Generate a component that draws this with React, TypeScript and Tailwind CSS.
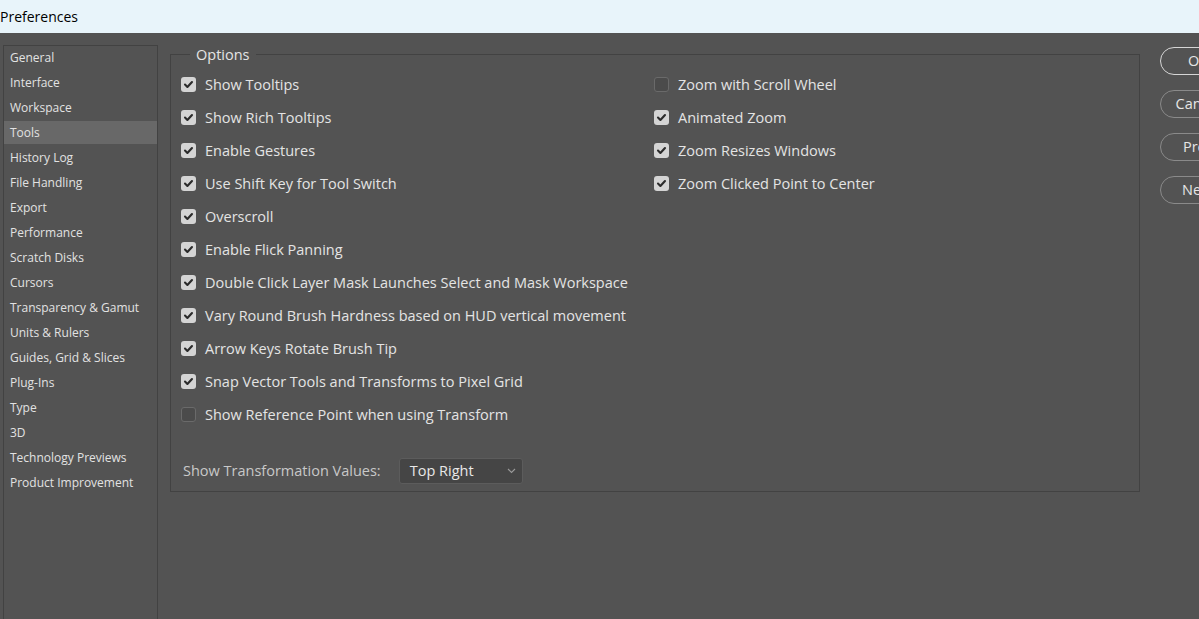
import React from "react";

const sidebar = [
  "General",
  "Interface",
  "Workspace",
  "Tools",
  "History Log",
  "File Handling",
  "Export",
  "Performance",
  "Scratch Disks",
  "Cursors",
  "Transparency & Gamut",
  "Units & Rulers",
  "Guides, Grid & Slices",
  "Plug-Ins",
  "Type",
  "3D",
  "Technology Previews",
  "Product Improvement",
];

const left: [string, boolean][] = [
  ["Show Tooltips", true],
  ["Show Rich Tooltips", true],
  ["Enable Gestures", true],
  ["Use Shift Key for Tool Switch", true],
  ["Overscroll", true],
  ["Enable Flick Panning", true],
  ["Double Click Layer Mask Launches Select and Mask Workspace", true],
  ["Vary Round Brush Hardness based on HUD vertical movement", true],
  ["Arrow Keys Rotate Brush Tip", true],
  ["Snap Vector Tools and Transforms to Pixel Grid", true],
  ["Show Reference Point when using Transform", false],
];

const right: [string, boolean][] = [
  ["Zoom with Scroll Wheel", false],
  ["Animated Zoom", true],
  ["Zoom Resizes Windows", true],
  ["Zoom Clicked Point to Center", true],
];

function Check({ on }: { on: boolean }) {
  return on ? (
    <span className="w-[15px] h-[15px] rounded-[3px] bg-[#d4d4d4] flex items-center justify-center shrink-0">
      <svg width="11" height="11" viewBox="0 0 11 11">
        <path d="M2 5.6 L4.4 8 L9 3" fill="none" stroke="#2b2b2b" strokeWidth="2.1" strokeLinecap="round" strokeLinejoin="round" />
      </svg>
    </span>
  ) : (
    <span className="w-[15px] h-[15px] rounded-[3px] bg-[#4b4b4b] border border-[#6a6a6a] shrink-0" />
  );
}

function Row({ label, on }: { label: string; on: boolean }) {
  return (
    <div className="h-[33px] flex items-center gap-[9px] text-[14.5px] text-[#e4e4e4] whitespace-nowrap">
      <Check on={on} />
      <span>{label}</span>
    </div>
  );
}

export default function App() {
  return (
    <div
      className="w-[1199px] h-[619px] bg-[#535353] overflow-hidden flex flex-col"
      style={{ fontFamily: '"Open Sans", "Noto Sans", sans-serif' }}
    >
      <div className="h-[33px] shrink-0 bg-[#e8f4fa] flex items-center text-[14px] text-black">
        Preferences
      </div>
      <div className="flex flex-1 pt-[12px] min-h-0">
        <div className="ml-[3px] w-[155px] shrink-0 border border-b-0 border-[#424242] flex flex-col gap-[2px]">
          {sidebar.map((s) => (
            <div
              key={s}
              className={
                "h-[23px] flex items-center pl-[6px] text-[12px] text-[#e2e2e2] whitespace-nowrap " +
                (s === "Tools" ? "bg-[#686868]" : "")
              }
            >
              {s}
            </div>
          ))}
        </div>
        <fieldset className="ml-[12px] w-[970px] h-[447px] shrink-0 border border-[#424242] pt-[4px] pl-[10px]">
          <legend className="ml-[9px] px-[6px] text-[14.5px] text-[#e4e4e4] leading-[19px]">Options</legend>
          <div className="grid grid-cols-[473px_1fr]">
            <div className="flex flex-col">
              {left.map(([l, on]) => (
                <Row key={l} label={l} on={on} />
              ))}
            </div>
            <div className="flex flex-col">
              {right.map(([l, on]) => (
                <Row key={l} label={l} on={on} />
              ))}
            </div>
          </div>
          <div className="flex items-center mt-[27px] pl-[2px]">
            <span className="text-[14.5px] text-[#c8c8c8] whitespace-nowrap">Show Transformation Values:</span>
            <div className="ml-[18px] w-[124px] h-[26px] rounded-[3px] bg-[#454545] border border-[#5c5c5c] flex items-center justify-between pl-[10px] pr-[6px]">
              <span className="text-[14.5px] text-[#e8e8e8]">Top Right</span>
              <svg width="9" height="6" viewBox="0 0 9 6">
                <path d="M1 1 L4.5 4.5 L8 1" fill="none" stroke="#9a9a9a" strokeWidth="1.1" />
              </svg>
            </div>
          </div>
        </fieldset>
        <div className="ml-[20px] shrink-0 flex flex-col gap-[15px] pt-[2px]">
          {["OK", "Cancel", "Prev", "Next"].map((b, i) => (
            <div
              key={b}
              className={
                "w-[76px] h-[28px] rounded-full border flex items-center justify-center text-[14.5px] text-[#e6e6e6] " +
                (i === 0 ? "border-[#d6d6d6]" : "border-[#8a8a8a]")
              }
            >
              {b}
            </div>
          ))}
        </div>
      </div>
    </div>
  );
}
